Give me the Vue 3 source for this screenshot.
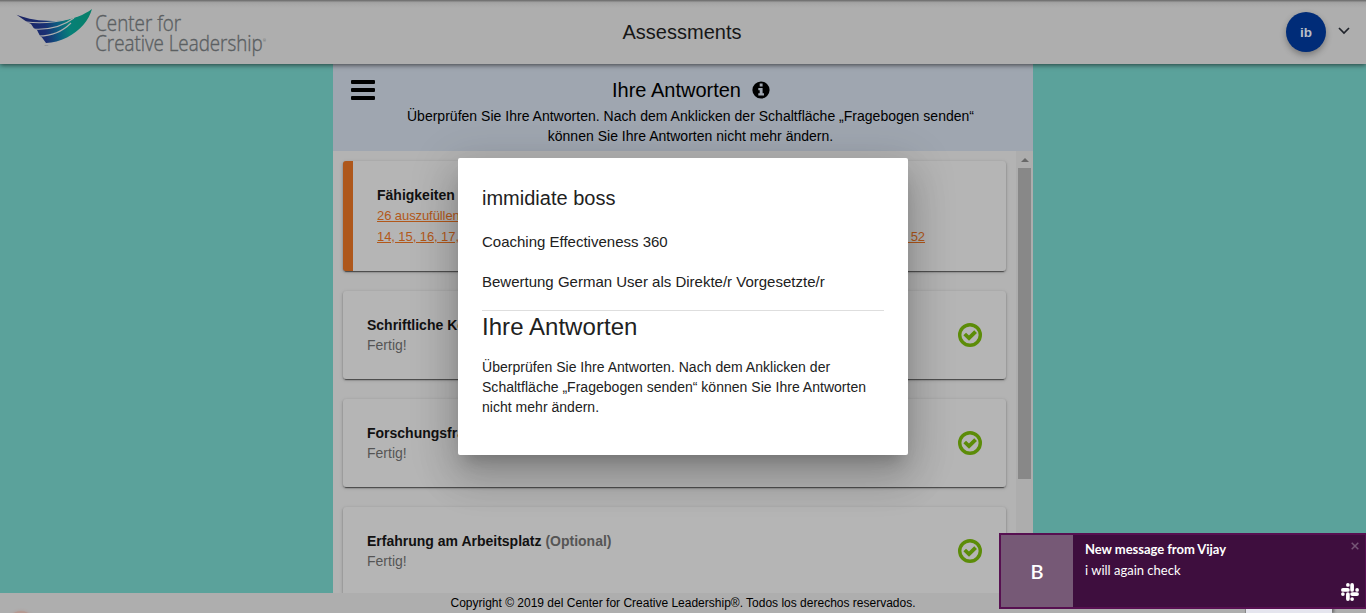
<script setup>
const cards = [
  { title: 'Fähigkeiten', pending: true },
  { title: 'Schriftliche Kommentare' },
  { title: 'Forschungsfragen' },
  { title: 'Erfahrung am Arbeitsplatz', optional: true },
]
</script>

<template>
  <div class="page">
    <header class="topbar">
      <svg class="logo" width="256" height="56" viewBox="14 3 256 56">
        <defs>
          <linearGradient id="wing" x1="17" y1="20" x2="87" y2="10" gradientUnits="userSpaceOnUse">
            <stop offset="0" stop-color="#1b2161" />
            <stop offset=".38" stop-color="#1a2f73" />
            <stop offset=".55" stop-color="#0c5a80" />
            <stop offset=".72" stop-color="#078078" />
            <stop offset="1" stop-color="#07806a" />
          </linearGradient>
        </defs>
        <path d="M16.500 14.700C30 20 45 21.500 60 20.700C74 19 84 15 92 9C89 20 80 31 67 37.500C60 41 53 42.700 46 43L42 37.500L40 36L37 30L34 28.500L31 24L27 22Z" fill="url(#wing)" />
        <g fill="none" stroke="#aeaeae" stroke-width="1.100">
          <path d="M26 22C44 24 66 22 81 14" />
          <path d="M33 29C47 30 62 27 74 18" />
          <path d="M39 36C51 36 63 31 71 23" />
        </g>
        <text x="44.500" y="46" font-size="2.500" fill="#686c70">TM</text>
        <g font-family="Open Sans" font-size="22.300" font-weight="300" fill="#5b5f62" stroke="#5b5f62" stroke-width=".4">
          <text x="95.200" y="31" textLength="86" lengthAdjust="spacingAndGlyphs">Center for</text>
          <text x="95.200" y="50.700" textLength="167.500" lengthAdjust="spacingAndGlyphs">Creative Leadership</text>
        </g>
        <text x="263" y="42" font-size="3.500" font-family="Open Sans" fill="#5b5f62">®</text>
      </svg>
      <h1>Assessments</h1>
      <div class="account">
        <span class="avatar">ib</span>
        <svg width="12" height="8" viewBox="0 0 12 8"><path d="M1 1L6 6L11 1" fill="none" stroke="#20242b" stroke-width="1.700" /></svg>
      </div>
    </header>

    <main class="panel">
      <section class="intro">
        <svg class="menu" width="24" height="20" viewBox="0 0 24 20"><path d="M1 0H23Q24 0 24 1V3Q24 4 23 4H1Q0 4 0 3V1Q0 0 1 0ZM1 8H23Q24 8 24 9V11Q24 12 23 12H1Q0 12 0 11V9Q0 8 1 8ZM1 16H23Q24 16 24 17V19Q24 20 23 20H1Q0 20 0 19V17Q0 16 1 16Z" /></svg>
        <div class="intro-copy">
          <h2>
            <span>Ihre Antworten</span>
            <svg width="18" height="18" viewBox="0 0 18 18"><circle cx="9" cy="9" r="8.600" /><path d="M7.700 2.500H10.600V5.400H7.700ZM6.300 7H10.600V12.300H12V14.500H6.300V12.300H7.700V9.200H6.300Z" fill="#9fa6b0" /></svg>
          </h2>
          <p>Überprüfen Sie Ihre Antworten. Nach dem Anklicken der Schaltfläche „Fragebogen senden“<br>können Sie Ihre Antworten nicht mehr ändern.</p>
        </div>
      </section>
      <div class="scroll-area">
        <div class="cards">
          <article v-for="card in cards" :key="card.title" class="card" :class="{ pending: card.pending }">
            <div>
              <h3>{{ card.title }} <span v-if="card.optional">(Optional)</span></h3>
              <template v-if="card.pending">
                <p class="link"><u>26 auszufüllende Fragen</u></p>
                <p class="link numbers"><u>14, 15, 16, 17, 18, 19, 20, 21, 22, 23, 24, 25, 26, 27, 28, 29, 30, 31,</u><u>&nbsp;52</u></p>
              </template>
              <p v-else>Fertig!</p>
            </div>
            <svg v-if="!card.pending" width="24" height="24" viewBox="0 0 24 24"><circle cx="12" cy="12" r="10.300" fill="none" stroke="#5c8c08" stroke-width="3.400" /><path d="M6.700 11L11 15.200L17.600 8.600" fill="none" stroke="#5c8c08" stroke-width="3.800" /></svg>
          </article>
        </div>
        <div class="scrollbar"><span class="arrow"></span><span class="thumb"></span></div>
      </div>
    </main>

    <footer>Copyright © 2019 del Center for Creative Leadership®. Todos los derechos reservados.</footer>

    <div class="overlay">
      <div class="dialog">
        <h2>immidiate boss</h2>
        <p class="lead">Coaching Effectiveness 360</p>
        <p class="lead second">Bewertung German User als Direkte/r Vorgesetzte/r</p>
        <hr>
        <h1>Ihre Antworten</h1>
        <p class="body">Überprüfen Sie Ihre Antworten. Nach dem Anklicken der<br>Schaltfläche „Fragebogen senden“ können Sie Ihre Antworten<br>nicht mehr ändern.</p>
      </div>
    </div>

    <div class="glow"></div>
    <div class="tab-edge"></div>
    <aside class="toast">
      <div class="initial">B</div>
      <div class="message"><strong>New message from Vijay</strong><span>i will again check</span></div>
      <div class="toast-icons">
        <svg width="8" height="8" viewBox="0 0 8 8"><path d="M.7.700L7.300 7.300M7.300.7L.7 7.300" stroke="#755676" stroke-width="1.500" /></svg>
        <svg width="18" height="18" viewBox="0 0 18 18" fill="none" stroke="#fff" stroke-width="3.700" stroke-linecap="round">
          <path d="M6.900 6.900H1.900M11.100 6.900V1.900M11.100 11.100H16.100M6.900 11.100V16.100" />
          <path d="M6.900 1.900H6.910M16.100 6.900H16.110M11.100 16.100H11.110M1.900 11.100H1.910" />
        </svg>
      </div>
    </aside>
  </div>
</template>

<style>
body { margin: 0; overflow: hidden; }
</style>

<style scoped>
* { box-sizing: border-box; }
h1, h2, h3, p { margin: 0; font-weight: 400; }
svg { display: block; flex: none; }
.page { position: relative; width: 1366px; height: 613px; overflow: hidden; display: flex; flex-direction: column; background: #5ba29b; font-family: "Liberation Sans", Arial, sans-serif; color: #000; }
.topbar { position: relative; z-index: 1; flex: none; height: 64px; padding: 0 16px 0 14px; display: grid; grid-template-columns: 1fr auto 1fr; align-items: center; background: linear-gradient(#6d6d6d 0, #797979 1px, #9e9e9e 2px, #a7a7a7 4px, #aeaeae 8px); box-shadow: 0 1px 5px rgba(0,0,0,.62); }
.logo { margin-top: -2px; }
.topbar h1 { font-size: 20px; color: #171717; }
.account { justify-self: end; display: flex; align-items: center; gap: 12px; }
.account svg { margin-top: -3px; }
.avatar { width: 40px; height: 40px; border-radius: 50%; background: #002c78; color: #b9bec7; display: grid; place-items: center; font-size: 13.5px; font-weight: 700; box-shadow: 0 3px 6px rgba(0,0,0,.3); }
.panel { width: 700px; height: 529px; margin: 0 auto; display: flex; flex-direction: column; background: #b3b3b3; }
.intro { height: 87px; flex: none; display: flex; padding: 16px 51px 0 18px; background: #9fa6b0; }
.intro-copy { flex: 1; text-align: center; margin-left: 24px; }
.intro h2 { display: flex; justify-content: center; align-items: center; gap: 11px; font-size: 20px; line-height: 20px; padding-left: 1px; }
.intro p { font-size: 14px; line-height: 20px; margin-top: 6px; letter-spacing: .015px; white-space: nowrap; }
.scroll-area { flex: 1; min-height: 0; display: flex; }
.cards { flex: 1; height: 442px; overflow: hidden; display: flex; flex-direction: column; gap: 20px; padding: 10px 10px 0 10px; }
.card { flex: none; height: 88px; padding: 0 24px; border-radius: 3px; display: flex; align-items: center; justify-content: space-between; background: #b5b5b5; box-shadow: 0 3px 1px -2px rgba(0,0,0,.4), 0 1px 2px rgba(0,0,0,.38), 0 1px 5px rgba(0,0,0,.08); }
.card.pending { height: 110px; border-left: 10px solid #ae571b; }
.card h3 { font-size: 14px; line-height: 20px; font-weight: 700; color: #111; }
.card h3 span { color: #555; }
.card p { font-size: 14px; line-height: 20px; color: #555; }
.card .link { color: #b2581a; font-size: 13px; line-height: 21px; letter-spacing: -.08px; }
.card .numbers { display: flex; justify-content: space-between; width: 548px; }
.scrollbar { width: 17px; background: #adadad; display: flex; flex-direction: column; align-items: center; }
.arrow { margin: 7px 0 6px; border: 4px solid transparent; border-top: 0; border-bottom-color: #686868; }
.thumb { width: 13px; height: 311px; background: #888; margin-right: 1px; }
footer { height: 20px; background: #aeaeae; text-align: center; font-size: 12px; line-height: 20px; }
.overlay { position: absolute; inset: 0; z-index: 2; display: flex; align-items: center; justify-content: center; }
.dialog { width: 450px; height: 297px; padding: 24px; border-radius: 2px; background: #fff; color: #212121; box-shadow: 0 11px 15px -7px rgba(0,0,0,.2), 0 24px 38px 3px rgba(0,0,0,.14), 0 9px 46px 8px rgba(0,0,0,.12); }
.dialog h2 { font-size: 20px; line-height: 32px; }
.lead { font-size: 15px; line-height: 20px; margin-top: 18px; }
.lead.second { margin-top: 20px; }
.dialog hr { width: 402px; height: 1px; margin: 18px 0 0; border: 0; background: #dedede; }
.dialog h1 { font-size: 24px; line-height: 32px; letter-spacing: .05px; }
.body { font-size: 14px; line-height: 20px; margin-top: 14px; letter-spacing: .02px; white-space: nowrap; }
.glow { position: absolute; left: 8px; top: 611px; width: 26px; height: 26px; border-radius: 50%; background: #b98c80; box-shadow: 0 0 3px #b98c80; opacity: .6; }
.tab-edge { position: absolute; left: 1245px; top: 608px; width: 87px; height: 5px; background: #e5e5ee; border-left: 1px solid #888; box-shadow: 2px 0 3px #666; }
.toast { position: absolute; z-index: 3; left: 999px; top: 533px; width: 368px; height: 76px; border: 2px solid #571051; background: #3e0e3e; color: #fff; display: flex; font-family: Lato, sans-serif; }
.initial { width: 72px; background: #765976; display: grid; place-items: center; font-size: 20px; font-weight: 600; }
.message { flex: 1; display: flex; flex-direction: column; padding: 4px 0 0 12px; font-size: 13px; line-height: 21px; }
.message strong { letter-spacing: -.04px; }
.toast-icons { display: flex; flex-direction: column; align-items: flex-end; justify-content: space-between; padding: 7px 6px 6px 0; }
</style>
